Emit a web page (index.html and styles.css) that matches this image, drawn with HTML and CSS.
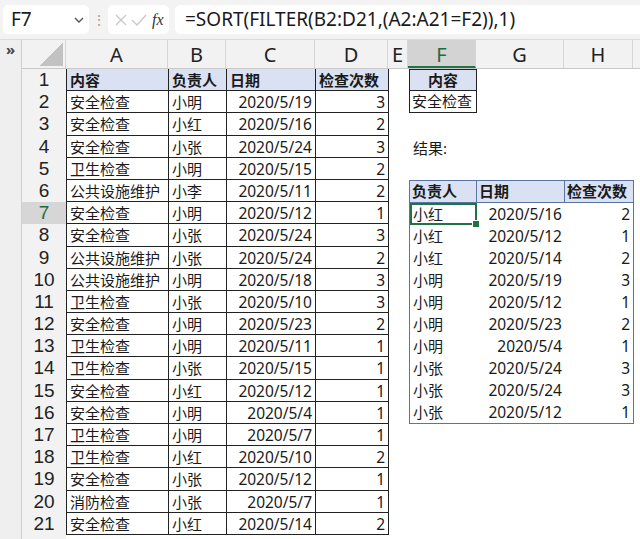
FILE: index.html
```html
<!DOCTYPE html>
<html lang="zh-CN">

<head>
    <meta charset="UTF-8">
    <title>SORT FILTER</title>
    <link rel="stylesheet" href="styles.css">
</head>

<body>
    <div class="formula-bar">
        <div class="name-box">
            <span>F7</span>
            <svg width="12" height="8" viewBox="0 0 12 8"><polyline points="2,2 6,6 10,2" fill="none" stroke="#555" stroke-width="1.4"/></svg>
        </div>
        <div class="dots">⋮</div>
        <div class="fx-box">
            <svg width="16" height="16" viewBox="0 0 16 16"><path d="M3 3 L13 13 M13 3 L3 13" stroke="#c8c8c8" stroke-width="1.3"/></svg>
            <svg width="18" height="16" viewBox="0 0 18 16"><polyline points="2,8 7,13 16,3" fill="none" stroke="#c8c8c8" stroke-width="1.3"/></svg>
            <span class="fx">fx</span>
        </div>
        <div class="formula">=SORT(FILTER(B2:D21,(A2:A21=F2)),1)</div>
    </div>

    <div class="sheet">
        <div class="gutter">»</div>
        <div class="main">
            <div class="col-heads">
                <div class="ch corner"></div>
                <div class="ch w-a">A</div>
                <div class="ch w-b">B</div>
                <div class="ch w-c">C</div>
                <div class="ch w-d">D</div>
                <div class="ch w-e">E</div>
                <div class="ch w-f on">F</div>
                <div class="ch w-g">G</div>
                <div class="ch w-h">H</div>
                <div class="ch rest"></div>
            </div>

            <div class="body">
                <div class="row-heads">
                    <div class="rh">1</div>
                    <div class="rh">2</div>
                    <div class="rh">3</div>
                    <div class="rh">4</div>
                    <div class="rh">5</div>
                    <div class="rh">6</div>
                    <div class="rh on">7</div>
                    <div class="rh">8</div>
                    <div class="rh">9</div>
                    <div class="rh">10</div>
                    <div class="rh">11</div>
                    <div class="rh">12</div>
                    <div class="rh">13</div>
                    <div class="rh">14</div>
                    <div class="rh">15</div>
                    <div class="rh">16</div>
                    <div class="rh">17</div>
                    <div class="rh">18</div>
                    <div class="rh">19</div>
                    <div class="rh">20</div>
                    <div class="rh">21</div>
                </div>

                <div class="data">
                    <div class="c hd">内容</div><div class="c hd">负责人</div><div class="c hd">日期</div><div class="c hd">检查次数</div>
                    <div class="c">安全检查</div><div class="c">小明</div><div class="c num">2020/5/19</div><div class="c num">3</div>
                    <div class="c">安全检查</div><div class="c">小红</div><div class="c num">2020/5/16</div><div class="c num">2</div>
                    <div class="c">安全检查</div><div class="c">小张</div><div class="c num">2020/5/24</div><div class="c num">3</div>
                    <div class="c">卫生检查</div><div class="c">小明</div><div class="c num">2020/5/15</div><div class="c num">2</div>
                    <div class="c">公共设施维护</div><div class="c">小李</div><div class="c num">2020/5/11</div><div class="c num">2</div>
                    <div class="c">安全检查</div><div class="c">小明</div><div class="c num">2020/5/12</div><div class="c num">1</div>
                    <div class="c">安全检查</div><div class="c">小张</div><div class="c num">2020/5/24</div><div class="c num">3</div>
                    <div class="c">公共设施维护</div><div class="c">小张</div><div class="c num">2020/5/24</div><div class="c num">2</div>
                    <div class="c">公共设施维护</div><div class="c">小明</div><div class="c num">2020/5/18</div><div class="c num">3</div>
                    <div class="c">卫生检查</div><div class="c">小张</div><div class="c num">2020/5/10</div><div class="c num">3</div>
                    <div class="c">安全检查</div><div class="c">小明</div><div class="c num">2020/5/23</div><div class="c num">2</div>
                    <div class="c">卫生检查</div><div class="c">小明</div><div class="c num">2020/5/11</div><div class="c num">1</div>
                    <div class="c">卫生检查</div><div class="c">小张</div><div class="c num">2020/5/15</div><div class="c num">1</div>
                    <div class="c">安全检查</div><div class="c">小红</div><div class="c num">2020/5/12</div><div class="c num">1</div>
                    <div class="c">安全检查</div><div class="c">小明</div><div class="c num">2020/5/4</div><div class="c num">1</div>
                    <div class="c">卫生检查</div><div class="c">小明</div><div class="c num">2020/5/7</div><div class="c num">1</div>
                    <div class="c">卫生检查</div><div class="c">小红</div><div class="c num">2020/5/10</div><div class="c num">2</div>
                    <div class="c">安全检查</div><div class="c">小张</div><div class="c num">2020/5/12</div><div class="c num">1</div>
                    <div class="c">消防检查</div><div class="c">小张</div><div class="c num">2020/5/7</div><div class="c num">1</div>
                    <div class="c">安全检查</div><div class="c">小红</div><div class="c num">2020/5/14</div><div class="c num">2</div>
                </div>

                <div class="spacer"></div>

                <div class="side">
                    <div class="key-head">内容</div>
                    <div class="key-val">安全检查</div>
                    <div class="label">结果:</div>

                    <div class="result">
                        <div class="r hd">负责人</div><div class="r hd">日期</div><div class="r hd last">检查次数</div>
                        <div class="r sel">小红</div><div class="r num">2020/5/16</div><div class="r num">2</div>
                        <div class="r">小红</div><div class="r num">2020/5/12</div><div class="r num">1</div>
                        <div class="r">小红</div><div class="r num">2020/5/14</div><div class="r num">2</div>
                        <div class="r">小明</div><div class="r num">2020/5/19</div><div class="r num">3</div>
                        <div class="r">小明</div><div class="r num">2020/5/12</div><div class="r num">1</div>
                        <div class="r">小明</div><div class="r num">2020/5/23</div><div class="r num">2</div>
                        <div class="r">小明</div><div class="r num">2020/5/4</div><div class="r num">1</div>
                        <div class="r">小张</div><div class="r num">2020/5/24</div><div class="r num">3</div>
                        <div class="r">小张</div><div class="r num">2020/5/24</div><div class="r num">3</div>
                        <div class="r">小张</div><div class="r num">2020/5/12</div><div class="r num">1</div>
                    </div>
                </div>
            </div>
        </div>
    </div>
</body>

</html>
```

FILE: styles.css
```css
* {
    box-sizing: border-box;
    margin: 0;
    padding: 0;
}

body {
    font-family: "Noto Sans", "Noto Sans CJK SC", sans-serif;
    background-color: #fff;
    color: #1a1a1a;
    width: 640px;
    height: 539px;
    overflow: hidden;
}

/* formula bar */

.formula-bar {
    display: flex;
    align-items: center;
    height: 40px;
    padding: 0 0 0 3px;
    background-color: #f3f3f3;
    border-bottom: 1px solid #dcdcdc;
}

.name-box {
    width: 86px;
    height: 29px;
    background-color: #fff;
    border-radius: 5px;
    display: flex;
    align-items: center;
    justify-content: space-between;
    padding: 0 4px 0 8px;
    font-size: 19px;
    line-height: 29px;
}

.dots {
    width: 19px;
    text-align: center;
    color: #a0a0a0;
    font-size: 14px;
}

.fx-box {
    width: 61px;
    height: 29px;
    background-color: #fff;
    border-radius: 5px;
    display: flex;
    align-items: center;
    gap: 1px;
    padding-left: 5px;
}

.fx {
    font-family: "Liberation Serif", serif;
    font-style: italic;
    font-size: 16px;
    margin-left: 3px;
    color: #333;
}

.formula {
    flex: 1;
    height: 29px;
    margin-left: 6px;
    background-color: #fff;
    border-radius: 5px 0 0 5px;
    padding-left: 10px;
    font-size: 19px;
    line-height: 29px;
    white-space: nowrap;
}

/* sheet */

.sheet {
    display: flex;
    height: 499px;
}

.gutter {
    width: 22px;
    background-color: #efefef;
    border-right: 1px solid #cfcfcf;
    font-size: 15px;
    font-weight: bold;
    text-align: center;
    line-height: 18px;
    color: #444;
}

.main {
    flex: 1;
}

.col-heads {
    display: flex;
    height: 29px;
    background-color: #f2f2f2;
    border-bottom: 1px solid #c9c9c9;
}

.ch {
    font-size: 20px;
    line-height: 29px;
    text-align: center;
    border-right: 1px solid #d6d6d6;
    color: #222;
}

.ch.on {
    background-color: #d3d3d3;
    color: #1e6b40;
    border-bottom: 2px solid #217346;
}

.corner {
    width: 44px;
    background: linear-gradient(to top left, #c2c2c2 50%, transparent 50%) no-repeat right 2px bottom 2px / 24px 24px;
}

.w-a { width: 102px; }
.w-b { width: 58px; }
.w-c { width: 89px; }
.w-d { width: 73px; }
.w-e { width: 20px; }
.w-f { width: 68px; }
.w-g { width: 88px; }
.w-h { width: 69px; }
.rest { flex: 1; border-right: none; }

.body {
    display: flex;
    height: 470px;
}

.row-heads {
    width: 44px;
    background-color: #f2f2f2;
}

.rh {
    height: 22.2px;
    font-family: "Liberation Sans", sans-serif;
    font-size: 19px;
    line-height: 22.2px;
    text-align: center;
    color: #222;
}

.rh.on {
    background-color: #d6d6d6;
    color: #1e6b40;
}

/* source table */

.data {
    display: grid;
    grid-template-columns: 102px 58px 89px 73px;
    grid-auto-rows: 22.2px;
    align-self: flex-start;
    border-left: 1px solid #222;
}

.c {
    border-right: 1px solid #222;
    border-bottom: 1px solid #222;
    font-size: 15px;
    line-height: 22px;
    padding: 0 3px;
    white-space: nowrap;
    overflow: hidden;
}

.hd {
    background-color: #d9e1f2;
    font-weight: bold;
}

.num {
    text-align: right;
    font-size: 15.5px;
}

.spacer {
    width: 20px;
}

/* criteria + result */

.side {
    display: grid;
    grid-template-columns: 68px 88px 69px;
    grid-template-rows: repeat(21, 22.2px);
}

.key-head {
    grid-row: 1;
    grid-column: 1;
    border: 1px solid #222;
    background-color: #d9e1f2;
    font-weight: bold;
    font-size: 15px;
    text-align: center;
    line-height: 20px;
}

.key-val {
    grid-row: 2;
    grid-column: 1;
    border: 1px solid #222;
    border-top: none;
    font-size: 15px;
    line-height: 21px;
    padding-left: 2px;
    white-space: nowrap;
}

.label {
    grid-row: 4;
    grid-column: 1 / span 2;
    font-size: 15px;
    line-height: 18px;
    padding: 3px 0 0 4px;
}

.result {
    grid-row: 6 / span 11;
    grid-column: 1 / span 3;
    display: grid;
    grid-template-columns: 67px 88px 1fr;
    grid-template-rows: repeat(11, 1fr);
    border: 1px solid #5a74a6;
}

.r {
    font-size: 15px;
    line-height: 22px;
    padding: 0 3px;
    white-space: nowrap;
}

.r.hd {
    border-right: 1px solid #5a74a6;
    border-bottom: 1px solid #5a74a6;
    padding-left: 2px;
    line-height: 21px;
}

.r.hd.last {
    border-right: none;
}

.r.num {
    font-size: 15.5px;
}

.sel {
    position: relative;
    outline: 2px solid #217346;
    outline-offset: -2px;
}

.sel::after {
    content: "";
    position: absolute;
    right: -3px;
    bottom: -3px;
    width: 6px;
    height: 6px;
    background-color: #217346;
    border: 1px solid #fff;
}
```
